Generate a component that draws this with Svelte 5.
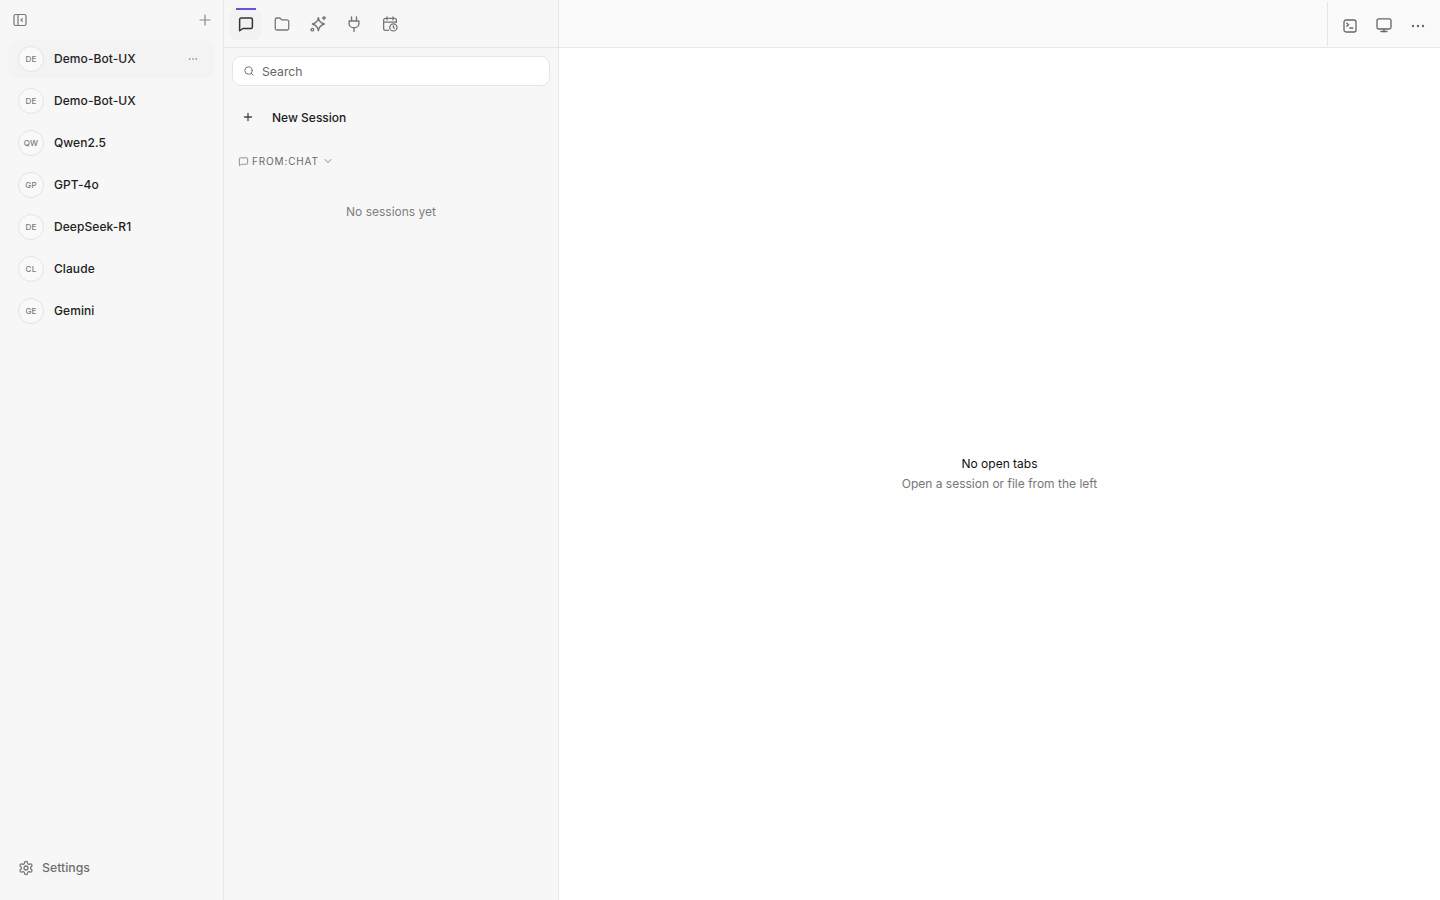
<script>
  const agents = [
    { code: 'DE', name: 'Demo-Bot-UX', active: true },
    { code: 'DE', name: 'Demo-Bot-UX' },
    { code: 'QW', name: 'Qwen2.5' },
    { code: 'GP', name: 'GPT-4o' },
    { code: 'DE', name: 'DeepSeek-R1' },
    { code: 'CL', name: 'Claude' },
    { code: 'GE', name: 'Gemini' }
  ];
</script>

<div class="app">
  <aside class="sidebar">
    <div class="side-top">
      <svg class="ic16" viewBox="0 0 16 16" fill="none" stroke="#777" stroke-width="1.2"><rect x="2" y="2.5" width="12" height="11" rx="1.8"/><path d="M6 2.500v11M10.600 6.400 9 8l1.600 1.600"/></svg>
      <svg class="ic14 plus-top" viewBox="0 0 14 14" fill="none" stroke="#888" stroke-width="1.2" stroke-linecap="round"><path d="M7 2v10M2 7h10"/></svg>
    </div>
    <div class="agents">
      {#each agents as a}
        <div class="agent" class:active={a.active}>
          <span class="avatar">{a.code}</span>
          <span class="agent-name">{a.name}</span>
          {#if a.active}
            <svg class="more-small" viewBox="0 0 12 4" fill="#777"><circle cx="2" cy="2" r="1"/><circle cx="6" cy="2" r="1"/><circle cx="10" cy="2" r="1"/></svg>
          {/if}
        </div>
      {/each}
    </div>
    <div class="settings">
      <svg class="ic16 gear" viewBox="0 0 24 24" fill="none" stroke="#777" stroke-width="1.9" stroke-linecap="round" stroke-linejoin="round"><path d="M12.220 2h-.44a2 2 0 0 0-2 2v.18a2 2 0 0 1-1 1.730l-.43.25a2 2 0 0 1-2 0l-.15-.08a2 2 0 0 0-2.730.73l-.22.38a2 2 0 0 0 .73 2.730l.15.1a2 2 0 0 1 1 1.720v.51a2 2 0 0 1-1 1.740l-.15.09a2 2 0 0 0-.73 2.730l.22.38a2 2 0 0 0 2.730.73l.15-.08a2 2 0 0 1 2 0l.43.25a2 2 0 0 1 1 1.730V20a2 2 0 0 0 2 2h.44a2 2 0 0 0 2-2v-.18a2 2 0 0 1 1-1.730l.43-.25a2 2 0 0 1 2 0l.15.08a2 2 0 0 0 2.730-.73l.22-.39a2 2 0 0 0-.73-2.730l-.15-.08a2 2 0 0 1-1-1.740v-.5a2 2 0 0 1 1-1.740l.15-.09a2 2 0 0 0 .73-2.730l-.22-.38a2 2 0 0 0-2.730-.73l-.15.08a2 2 0 0 1-2 0l-.43-.25a2 2 0 0 1-1-1.730V4a2 2 0 0 0-2-2z"/><circle cx="12" cy="12" r="3"/></svg>
      <span>Settings</span>
    </div>
  </aside>

  <section class="panel">
    <div class="tabs">
      <div class="tab active">
        <svg class="ic18" viewBox="0 0 24 24" fill="none" stroke="#333" stroke-width="2" stroke-linejoin="round"><path d="M3.500 6a2 2 0 0 1 2-2h13a2 2 0 0 1 2 2v10a2 2 0 0 1-2 2H8l-4.500 3z"/></svg>
      </div>
      <div class="tab">
        <svg class="ic18" viewBox="0 0 24 24" fill="none" stroke="#777" stroke-width="1.700" stroke-linejoin="round"><path d="M3 6.500A2.500 2.500 0 0 1 5.500 4h3.700l2.300 2.500H18.500A2.500 2.500 0 0 1 21 9v8.500a2.500 2.500 0 0 1-2.500 2.500h-13A2.500 2.500 0 0 1 3 17.500z"/></svg>
      </div>
      <div class="tab">
        <svg class="ic18" viewBox="0 0 24 24" fill="none" stroke="#777" stroke-width="1.900" stroke-linejoin="round" stroke-linecap="round"><path d="M12.500 3.500c.7 4.800 2.700 7 8 8.500-5.300 1.500-7.300 3.700-8 9-.7-5.300-2.700-7.500-8-9 5.300-1.500 7.300-3.700 8-8.500z"/><path d="M20 2v4M18 4h4"/><circle cx="4.500" cy="19.500" r="1.700"/></svg>
      </div>
      <div class="tab">
        <svg class="ic18" viewBox="0 0 24 24" fill="none" stroke="#777" stroke-width="1.900" stroke-linecap="round" stroke-linejoin="round"><path d="M8.700 2.500V8M15.300 2.500V8M5.500 8h13v3.500a6.500 5.500 0 0 1-13 0zM12 17v5"/></svg>
      </div>
      <div class="tab">
        <svg class="ic18" viewBox="0 0 24 24" fill="none" stroke="#777" stroke-width="1.700" stroke-linecap="round" stroke-linejoin="round"><path d="M8 2.500v4M16 2.500v4M3.500 9.500h17M10 20.500H6a2.500 2.500 0 0 1-2.500-2.500V7A2.500 2.500 0 0 1 6 4.500h12A2.500 2.500 0 0 1 20.500 7v3"/><circle cx="16.500" cy="16.500" r="4.800"/><path d="M16.500 14.300v2.300l1.400 1"/></svg>
      </div>
    </div>
    <div class="panel-body">
      <div class="search">
        <svg class="ic12" viewBox="0 0 12 12" fill="none" stroke="#777" stroke-width="1" stroke-linecap="round"><circle cx="5.500" cy="5.500" r="3.700"/><path d="m8.300 8.300 2 2"/></svg>
        <span>Search</span>
      </div>
      <div class="new-session">
        <svg class="ic12" viewBox="0 0 12 12" fill="none" stroke="#444" stroke-width="1.300" stroke-linecap="round"><path d="M6 2.500v7M2.500 6h7"/></svg>
        <span>New Session</span>
      </div>
      <div class="filter">
        <svg class="ic11" viewBox="0 0 12 12" fill="none" stroke="#888" stroke-width="1" stroke-linejoin="round"><path d="M1.500 3a1 1 0 0 1 1-1h7a1 1 0 0 1 1 1v5a1 1 0 0 1-1 1H4l-2.500 1.500z"/></svg>
        <span>FROM:CHAT</span>
        <svg class="chev" viewBox="0 0 10 10" fill="none" stroke="#888" stroke-width="1" stroke-linecap="round" stroke-linejoin="round"><path d="m2 3.500 3 3 3-3"/></svg>
      </div>
      <div class="empty">No sessions yet</div>
    </div>
  </section>

  <main class="main">
    <header class="main-head">
      <div class="head-actions">
        <svg class="ic16" viewBox="0 0 16 16" fill="none" stroke="#666" stroke-width="1.300" stroke-linecap="round" stroke-linejoin="round"><rect x="2" y="2" width="12" height="12" rx="2"/><path d="m4.800 5.200 1.800 1.600-1.800 1.500M7.800 10h3"/></svg>
        <svg class="ic18 mid" viewBox="0 0 18 18" fill="none" stroke="#666" stroke-width="1.300" stroke-linecap="round" stroke-linejoin="round"><rect x="2" y="2.800" width="14" height="10.200" rx="1.800"/><path d="M9 13v2.500M6 15.500h6"/></svg>
        <svg class="ic16" viewBox="0 0 16 16" fill="#666"><circle cx="3" cy="8" r="1.200"/><circle cx="8" cy="8" r="1.200"/><circle cx="13" cy="8" r="1.200"/></svg>
      </div>
    </header>
    <div class="main-body">
      <div class="no-tabs">No open tabs</div>
      <div class="hint">Open a session or file from the left</div>
    </div>
  </main>
</div>

<style>
  :global(body) {
    margin: 0;
    font-family: Inter, "Liberation Sans", sans-serif;
    -webkit-font-smoothing: antialiased;
  }
  svg { display: block; flex: none; }
  .ic11 { width: 11px; height: 11px; }
  .ic12 { width: 12px; height: 12px; }
  .ic14 { width: 14px; height: 14px; }
  .ic16 { width: 16px; height: 16px; }
  .ic18 { width: 18px; height: 18px; }

  .app {
    display: flex;
    height: 900px;
    overflow: hidden;
    background: #f7f7f7;
  }

  .sidebar {
    width: 224px;
    box-sizing: border-box;
    flex: none;
    display: flex;
    flex-direction: column;
    border-right: 1px solid #e7e7e7;
    padding: 0 8px;
  }
  .side-top {
    height: 40px;
    display: flex;
    align-items: center;
    justify-content: space-between;
    padding: 0 3px 0 4px;
  }
  .agents {
    flex: 1;
    display: flex;
    flex-direction: column;
    gap: 4px;
  }
  .agent {
    height: 38px;
    border-radius: 10px;
    display: flex;
    align-items: center;
    gap: 10px;
    padding: 0 17px 0 10px;
    width: 207px;
    box-sizing: border-box;
  }
  .agent.active { background: #f3f3f3; }
  .avatar {
    width: 24px;
    height: 24px;
    border: 1px solid #e4e4e4;
    border-radius: 50%;
    background: #f9f9f9;
    display: flex;
    align-items: center;
    justify-content: center;
    font-size: 8px;
    font-weight: 500;
    letter-spacing: 0.2px;
    color: #7a7a7a;
    flex: none;
  }
  .agent-name {
    flex: 1;
    font-size: 12px;
    line-height: 16px;
    font-weight: 500;
    letter-spacing: 0.07px;
    color: #222;
    white-space: nowrap;
    padding-bottom: 1px;
  }
  .more-small { width: 10px; height: 4px; }
  .settings {
    height: 34px;
    margin-bottom: 16px;
    display: flex;
    align-items: center;
    gap: 8px;
    padding-left: 10px;
    font-size: 12.300px;
    font-weight: 500;
    color: #6f6f6f;
  }
  .gear { margin-top: 1px; }

  .panel {
    width: 335px;
    flex: none;
    box-sizing: border-box;
    border-right: 1px solid #e7e7e7;
    display: flex;
    flex-direction: column;
  }
  .tabs {
    border-bottom: 1px solid #e7e7e7;
    display: flex;
    align-items: flex-start;
    gap: 4px;
    padding: 8px 0 0 6px;
    height: 39px;
  }
  .tab {
    width: 32px;
    height: 32px;
    display: flex;
    align-items: center;
    justify-content: center;
    border-radius: 8px;
    position: relative;
  }
  .tab.active { background: #f2f2f2; margin-left: -1px; padding-left: 1px; }
  .tab.active::before {
    content: "";
    position: absolute;
    top: 0;
    left: 7px;
    width: 20px;
    height: 1.500px;
    background: #6d4fe0;
  }
  .panel-body {
    padding: 8px 8px 0;
    display: flex;
    flex-direction: column;
  }
  .search {
    height: 30px;
    box-sizing: border-box;
    background: #fff;
    border: 1px solid #e6e6e6;
    border-radius: 9px;
    display: flex;
    align-items: center;
    gap: 7px;
    padding-left: 10px;
    font-size: 12.200px;
    color: #666;
  }
  .new-session {
    display: flex;
    align-items: center;
    gap: 18px;
    height: 32px;
    margin-top: 15px;
    padding-left: 10px;
    font-size: 12px;
    font-weight: 500;
    color: #222;
  }
  .filter {
    display: flex;
    align-items: center;
    gap: 3px;
    margin-top: 21px;
    height: 14px;
    padding-left: 6px;
    font-size: 10px;
    font-weight: 400;
    letter-spacing: 0.850px;
    color: #6a6a6a;
  }
  .chev { width: 10px; height: 10px; margin-left: 1px; }
  .empty {
    margin-top: 36px;
    text-align: center;
    font-size: 12px;
    line-height: 16px;
    color: #7e7e7e;
  }

  .main {
    flex: 1;
    display: flex;
    flex-direction: column;
    min-width: 0;
    background: #fafafa;
  }
  .main-head {
    height: 47px;
    flex: none;
    box-sizing: content-box;
    border-bottom: 1px solid #e7e7e7;
    display: flex;
    justify-content: flex-end;
    align-items: flex-start;
  }
  .head-actions {
    width: 113px;
    height: 44px;
    margin-top: 2px;
    border-left: 1px solid #e7e7e7;
    display: flex;
    align-items: center;
    gap: 18px;
    padding: 3px 0 0 14px;
    box-sizing: border-box;
  }
  .mid { margin: 0 -1px; position: relative; top: -1px; }
  .main-body {
    flex: 1;
    background: #fefefe;
    display: flex;
    flex-direction: column;
    align-items: center;
    justify-content: center;
    gap: 4px;
  }
  .no-tabs {
    font-size: 12px;
    line-height: 16px;
    font-weight: 400;
    color: #111;
  }
  .hint {
    font-size: 12px;
    line-height: 16px;
    color: #777;
  }
</style>
